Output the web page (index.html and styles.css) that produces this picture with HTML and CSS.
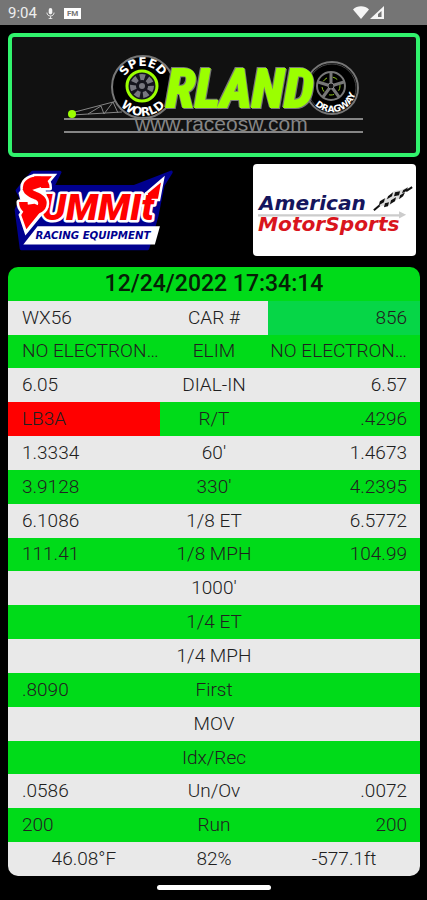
FILE: index.html
```html
<!DOCTYPE html>
<html lang="en">
<head>
<meta charset="utf-8">
<meta name="viewport" content="width=device-width, initial-scale=1">
<title>Orland Speed World Dragway</title>
<link rel="stylesheet" href="styles.css">
</head>
<body>
<header class="status">
  <span>9:04</span>
  <svg class="mic" viewBox="0 0 10 14" aria-hidden="true"><rect x="3" y="1" width="4" height="7" rx="2"/><path d="M1 6c0 5 8 5 8 0M5 10v3M3 12.500h4" fill="none" stroke="#eee"/></svg>
  <span class="fm">FM</span>
  <svg class="signal" viewBox="0 0 32 14" aria-hidden="true"><path d="M0 3.500C4-.7 12-.7 16 3.500L8 13z"/><path d="M17 13L31 0v13z"/><path d="M25 8l3.500-3v6H25z" fill="#757575"/></svg>
</header>
<main class="page">
  <a class="banner" href="#">
    <svg viewBox="0 0 404 116" role="img" aria-label="Orland Speed World Dragway">
      <defs>
        <path id="arcTop" d="M110 50a21 21 0 0 1 42 0"/>
        <path id="arcBottom" d="M102 50a29 29 0 0 0 58 0"/>
        <path id="arcDrag" d="M296 53a24 24 0 0 0 48-4"/>
      </defs>
      <g fill="none" stroke="#858585">
        <path d="M52 82h299M52 95h299" stroke-width="2"/>
        <path d="M59 76l46-12M60 78l50-3M76 77l13-8 3 8 9-12 5 11"/>
      </g>
      <circle cx="60" cy="77" r="4" fill="#9bff00"/>
      <circle cx="320" cy="51" r="26" fill="#000" stroke="#777" stroke-width="2"/>
      <circle cx="320" cy="51" r="24" fill="none" stroke="#444"/>
      <g fill="none" stroke="#777">
        <circle cx="319" cy="49" r="14" stroke-width="2"/>
        <path d="M319 49V36M319 49l13-4M319 49l8 11M319 49l-8 11M319 49l-13-4" stroke-width="3"/>
        <circle cx="319" cy="49" r="9" stroke="#8fc41d" stroke-width="1" stroke-dasharray="5 6"/>
      </g>
      <circle cx="319" cy="49" r="3" fill="#111" stroke="#888"/>
      <text class="wheel-text small"><textPath href="#arcDrag" startOffset="56%" text-anchor="middle">DRAGWAY</textPath></text>
      <circle cx="131" cy="50" r="31" fill="#000" stroke="#777" stroke-width="2"/>
      <circle cx="130" cy="49" r="15" fill="#15151d" stroke="#9bff00" stroke-width="3"/>
      <circle cx="130" cy="49" r="9" fill="none" stroke="#77777f" stroke-width="6" stroke-dasharray="5 3"/>
      <circle cx="130" cy="49" r="3" fill="#77777f"/>
      <text class="wheel-text"><textPath href="#arcTop" startOffset="50%" text-anchor="middle">SPEED</textPath></text>
      <text class="wheel-text"><textPath href="#arcBottom" startOffset="50%" text-anchor="middle">WORLD</textPath></text>
      <text class="rland" x="154" y="70">RLAND</text>
      <text class="site" x="123" y="94">www.raceosw.com</text>
    </svg>
  </a>
  <div class="sponsors">
    <a class="summit" href="#">
      <svg viewBox="0 0 164 92" role="img" aria-label="Summit Racing Equipment">
        <path d="M24 9h27l-7 14h80l36-14-8 13-6 30-9 32H13L8 46l5-11-4-8z" fill="#00008f" stroke="#00008f" stroke-width="3" stroke-linejoin="round"/>
        <path d="M29 62h120l-5 18H15z" fill="#fff"/>
        <path class="white-edge" d="M137 30l13-11-3 16h-9z"/>
        <text class="summit-name" x="33" y="56">UMMIt</text>
        <path d="M137 30l13-11-3 16h-9z" fill="#f00"/>
        <path class="white-edge" d="M26 13h17l-9 11 3 19-19 23-5-15 4-6-4-15z"/>
        <text class="summit-name big" x="10" y="50">S</text>
        <path d="M12 42l14-2 9 4-17 21-5-14 3-5z" fill="#f00"/>
        <path d="M26 13h17l-9 10-12 4-8-1z" fill="#f00"/>
        <text class="racing" x="27" y="75">RACING EQUIPMENT</text>
      </svg>
    </a>
    <a class="american" href="#">
      <svg viewBox="0 0 162 91" role="img" aria-label="American MotorSports">
        <path d="M5 50h140v-3l7 3.500-7 3.500v-2H5z" fill="#ccc"/>
        <text class="am" x="6" y="46">American</text>
        <text class="ms" x="5" y="67">MotorSports</text>
        <path d="M120 46l7-6M152 27l6-4" stroke="#111" stroke-width="2"/>
        <path d="M125 38c5-6 8-2 12-8s8-2 16-7l-4 9c-5 4-7 2-11 7s-8 1-12 3z" fill="#ddd"/>
        <path d="M126 37l5-3-1 4-5 3zM131 39l4-1-1 4-4 1zM134 32l5-4-1 4-5 3zM137 36l5-3-1 4-5 3zM141 28l5-1-1 4-5 1zM146 31l5-3-2 4-4 3zM149 26l5-3-2 4-4 2z" fill="#111"/>
      </svg>
    </a>
  </div>
  <table class="slip">
    <thead><tr><th class="stamp" colspan="3">12/24/2022 17:34:14</th></tr></thead>
    <tbody>
      <tr><td>WX56</td><th scope="row">CAR #</th><td class="winner">856</td></tr>
      <tr><td>NO ELECTRON…</td><th scope="row">ELIM</th><td>NO ELECTRON…</td></tr>
      <tr><td>6.05</td><th scope="row">DIAL-IN</th><td>6.57</td></tr>
      <tr><td class="foul">LB3A</td><th scope="row">R/T</th><td>.4296</td></tr>
      <tr><td>1.3334</td><th scope="row">60'</th><td>1.4673</td></tr>
      <tr><td>3.9128</td><th scope="row">330'</th><td>4.2395</td></tr>
      <tr><td>6.1086</td><th scope="row">1/8 ET</th><td>6.5772</td></tr>
      <tr><td>111.41</td><th scope="row">1/8 MPH</th><td>104.99</td></tr>
      <tr><td></td><th scope="row">1000'</th><td></td></tr>
      <tr><td></td><th scope="row">1/4 ET</th><td></td></tr>
      <tr><td></td><th scope="row">1/4 MPH</th><td></td></tr>
      <tr><td>.8090</td><th scope="row">First</th><td></td></tr>
      <tr><td></td><th scope="row">MOV</th><td></td></tr>
      <tr><td></td><th scope="row">Idx/Rec</th><td></td></tr>
      <tr><td>.0586</td><th scope="row">Un/Ov</th><td>.0072</td></tr>
      <tr><td>200</td><th scope="row">Run</th><td>200</td></tr>
      <tr class="weather"><td>46.08°F</td><td>82%</td><td>-577.1ft</td></tr>
    </tbody>
  </table>
</main>
<footer class="home"><span></span></footer>
</body>
</html>
```
FILE: styles.css
```css
* { box-sizing: border-box; }
body {
  margin: 0;
  min-height: 100vh;
  display: flex;
  flex-direction: column;
  background: #000;
  color: #202020;
  font-family: Roboto, "Liberation Sans", sans-serif;
}
svg { display: block; width: 100%; }
.status {
  height: 25px;
  display: flex;
  align-items: center;
  gap: 9px;
  padding: 1px 42px 0 8px;
  background: #757575;
  color: #eee;
  font-size: 15px;
}
.status svg { fill: #f5f5f5; }
.status .mic { width: 9px; height: 13px; }
.fm {
  padding: 0 3px;
  background: #fff;
  color: #777;
  font-size: 8px;
  font-weight: 700;
  line-height: 11px;
}
.status .signal { width: 32px; height: 14px; margin-left: auto; }
.page {
  flex: 1;
  display: flex;
  flex-direction: column;
  padding: 8px 7px 0 8px;
}
.banner {
  display: block;
  border: 4px solid #31f36d;
  border-radius: 6px;
  background: #111;
}
.wheel-text {
  fill: #fff;
  font: 700 12px "DejaVu Sans", sans-serif;
}
.wheel-text.small { font-size: 9px; }
.rland {
  fill: #9bff00;
  stroke: #9bff00;
  stroke-width: 2px;
  filter: drop-shadow(1px 1px 0 #777) drop-shadow(-1px -1px 0 #777);
  font: italic 700 54px "Liberation Sans Narrow", "Roboto Condensed", sans-serif;
}
.site {
  fill: #858585;
  font: 21px "Liberation Sans", sans-serif;
}
.sponsors {
  display: flex;
  justify-content: space-between;
  align-items: center;
  padding: 6px 4px 10px 0;
}
.summit { width: 41%; }
.american {
  width: 40%;
  border-radius: 4px;
  background: #fff;
}
.white-edge {
  fill: #fff;
  stroke: #fff;
  stroke-width: 5px;
}
.summit-name {
  fill: #f00;
  stroke: #fff;
  stroke-width: 5px;
  stroke-linejoin: round;
  paint-order: stroke;
  font: italic 900 37px Roboto, sans-serif;
}
.summit-name.big { font-size: 50px; }
.racing { fill: #00008f; font: italic 700 10px "DejaVu Sans", sans-serif; }
.am { fill: #15155d; font: italic 700 20px "DejaVu Sans", sans-serif; }
.ms { fill: #d9151d; font: italic 700 20px "DejaVu Sans", sans-serif; }
.slip {
  flex: 1;
  display: grid;
  grid-auto-rows: 1fr;
  overflow: hidden;
  border-radius: 10px;
  font-size: 19px;
}
.slip thead, .slip tbody { display: contents; }
.slip tr {
  display: grid;
  grid-template-columns: 7fr 5fr 7fr;
  background: #00db19;
}
.slip tbody tr:nth-child(odd) { background: #e9e9e9; }
.slip th, .slip td {
  display: flex;
  align-items: center;
  min-width: 0;
  padding: 0;
  font-weight: 300;
  line-height: 24px;
  white-space: nowrap;
}
.slip th { justify-content: center; }
.slip td:first-child { padding-left: 14px; }
.slip td:last-child { padding-right: 13px; justify-content: flex-end; }
.slip .stamp {
  grid-column: 1 / -1;
  color: #062006;
  font-size: 23px;
  font-weight: 500;
}
.slip .winner { background: #06d647; }
.slip .foul { background: #f00; }
.slip .weather td { justify-content: center; padding: 0; }
.home {
  height: 24px;
  display: flex;
  justify-content: center;
  padding-top: 9px;
}
.home span {
  width: 114px;
  height: 5px;
  border-radius: 3px;
  background: #fff;
}
```
